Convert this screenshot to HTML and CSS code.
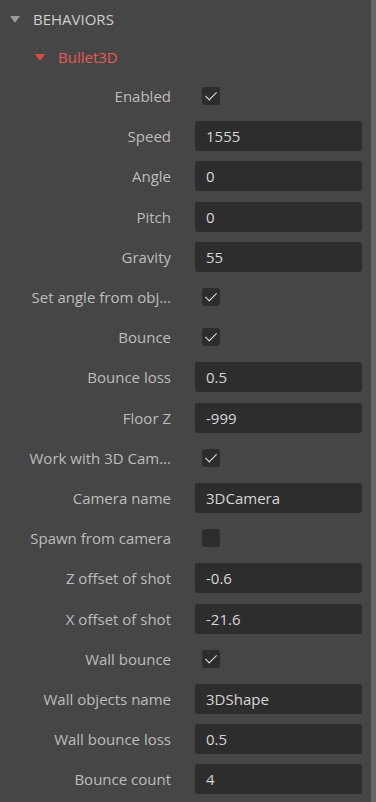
FILE: index.html
```html
<!DOCTYPE html>
<html lang="en">
  <head>
    <title>Behaviors</title>
    <meta charset="UTF-8" />
    <link rel="stylesheet" href="styles.css">
  </head>
  <body>
    <div class="panel">
      <div class="props">
        <div class="section-head">
          <span class="caret"></span>
          <span class="section-title">BEHAVIORS</span>
        </div>
        <div class="behavior-head">
          <span class="caret red"></span>
          <span class="behavior-title">Bullet3D</span>
        </div>

        <div class="row"><span class="label">Enabled</span><span class="check on"></span></div>
        <div class="row"><span class="label">Speed</span><span class="field">1555</span></div>
        <div class="row"><span class="label">Angle</span><span class="field">0</span></div>
        <div class="row"><span class="label">Pitch</span><span class="field">0</span></div>
        <div class="row"><span class="label">Gravity</span><span class="field">55</span></div>
        <div class="row"><span class="label">Set angle from obj...</span><span class="check on"></span></div>
        <div class="row"><span class="label">Bounce</span><span class="check on"></span></div>
        <div class="row"><span class="label">Bounce loss</span><span class="field">0.5</span></div>
        <div class="row"><span class="label">Floor Z</span><span class="field">-999</span></div>
        <div class="row"><span class="label">Work with 3D Cam...</span><span class="check on"></span></div>
        <div class="row"><span class="label">Camera name</span><span class="field">3DCamera</span></div>
        <div class="row"><span class="label">Spawn from camera</span><span class="check"></span></div>
        <div class="row"><span class="label">Z offset of shot</span><span class="field">-0.6</span></div>
        <div class="row"><span class="label">X offset of shot</span><span class="field">-21.6</span></div>
        <div class="row"><span class="label">Wall bounce</span><span class="check on"></span></div>
        <div class="row"><span class="label">Wall objects name</span><span class="field">3DShape</span></div>
        <div class="row"><span class="label">Wall bounce loss</span><span class="field">0.5</span></div>
        <div class="row"><span class="label">Bounce count</span><span class="field">4</span></div>
      </div>
      <div class="scrollbar"></div>
    </div>
  </body>
</html>
```

FILE: styles.css
```css
html, body {
  margin: 0;
  padding: 0;
  height: 100%;
  background-color: #464646;
  overflow: hidden;
  font-family: "Open Sans", "Noto Sans", sans-serif;
  font-size: 15px;
  color: #bdbdbd;
}
.panel {
  display: flex;
  height: 100%;
}
.props {
  flex: 1;
  display: flex;
  flex-direction: column;
}
.scrollbar {
  width: 5px;
  background: #676767;
}
.section-head,
.behavior-head {
  display: flex;
  align-items: center;
  height: 38px;
}
.behavior-head {
  height: 38px;
}
.section-head {
  padding-left: 10px;
  gap: 13px;
}
.behavior-head {
  padding-left: 35px;
  gap: 13px;
}
.caret {
  width: 0;
  height: 0;
  border-left: 5px solid transparent;
  border-right: 5px solid transparent;
  border-top: 7px solid #9a9a9a;
  margin-top: 1px;
}
.caret.red {
  border-top-color: #e04848;
}
.section-title {
  color: #cfcfcf;
}
.behavior-title {
  color: #e65a5a;
}
.row {
  display: grid;
  grid-template-columns: 171px 167px;
  column-gap: 24px;
  align-items: center;
  height: 40.2px;
}
.label {
  text-align: right;
  white-space: nowrap;
  overflow: hidden;
}
.field {
  height: 30px;
  line-height: 30px;
  background: #2d2d2d;
  border-radius: 3px;
  padding-left: 11px;
  color: #d6d6d6;
}
.check {
  width: 18px;
  height: 18px;
  margin-left: 7px;
  background: #2d2d2d;
  border-radius: 3px;
  position: relative;
}
.check.on::after {
  content: "";
  position: absolute;
  left: 6px;
  top: 2px;
  width: 5px;
  height: 10px;
  border-right: 1.5px solid #e6e6e6;
  border-bottom: 1.5px solid #e6e6e6;
  transform: rotate(45deg);
}
```
